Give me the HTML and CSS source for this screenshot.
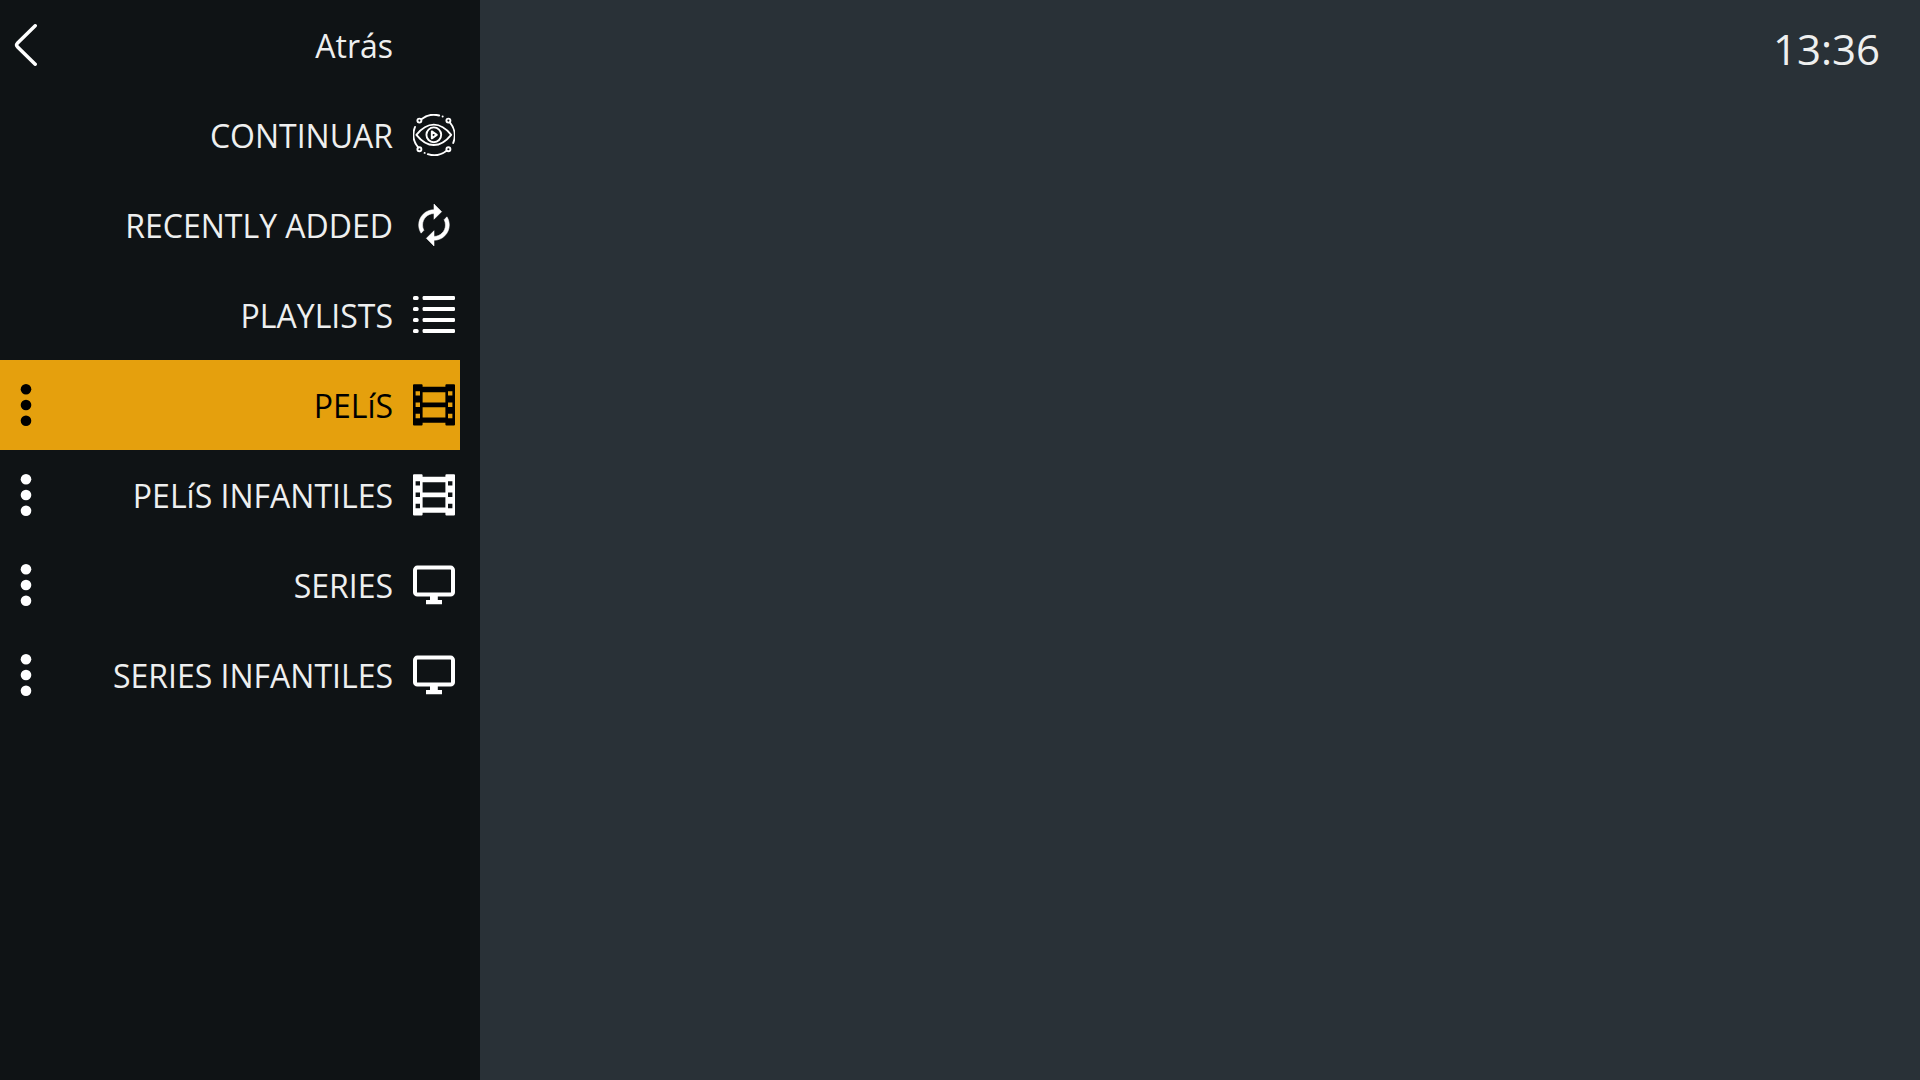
FILE: index.html
```html
<!DOCTYPE html>
<html lang="es">
<head>
    <meta charset="UTF-8">
    <title>Biblioteca</title>
    <link rel="stylesheet" href="styles.css">
</head>
<body>
    <svg class="sprite" aria-hidden="true">
        <symbol id="icon-back" viewBox="0 0 42 42">
            <path d="M30.2 1.8L12.6 19Q10.6 21 12.6 23L30.2 40.2" fill="none" stroke="currentColor" stroke-width="3.5" stroke-linecap="round"/>
        </symbol>
        <symbol id="icon-more" viewBox="0 0 42 42">
            <g fill="currentColor">
                <circle cx="21" cy="5.3" r="5.3"/>
                <circle cx="21" cy="21" r="5.3"/>
                <circle cx="21" cy="36.7" r="5.3"/>
            </g>
        </symbol>
        <symbol id="icon-eye" viewBox="0 0 42 42">
            <g fill="none" stroke="currentColor" stroke-width="1.9" stroke-linecap="round" stroke-linejoin="round">
                <circle cx="6.4" cy="6.6" r="2"/>
                <circle cx="35.4" cy="6.6" r="2"/>
                <circle cx="6.4" cy="35.2" r="2"/>
                <circle cx="35.4" cy="35.2" r="2"/>
                <path d="M8.4 5.2A20.2 20.2 0 0 1 26.2 1.5"/>
                <path d="M36.8 8.4A20.2 20.2 0 0 1 40.2 29"/>
                <path d="M33.6 36.8A20.2 20.2 0 0 1 14.8 40.2"/>
                <path d="M5.2 33.4A20.2 20.2 0 0 1 2 13"/>
                <path d="M29.6 2.5h.1M11.6 38.9h.1"/>
                <path d="M3.4 20.8Q11.6 10.6 20.8 10.6T38.2 20.8Q30 31 20.8 31T3.4 20.8z"/>
                <circle cx="20.8" cy="20.8" r="7.4"/>
                <path d="M18.8 17.4v7l5-3.5z"/>
            </g>
        </symbol>
        <symbol id="icon-recent" viewBox="1 1 22 22">
            <path fill="currentColor" stroke="currentColor" stroke-width=".3" d="M12 6v3l4-4-4-4v3c-4.42 0-8 3.58-8 8 0 1.57.46 3.03 1.24 4.26L6.7 14.8c-.45-.83-.7-1.79-.7-2.8 0-3.31 2.69-6 6-6zm6.76 1.74L17.3 9.2c.44.84.7 1.79.7 2.8 0 3.31-2.69 6-6 6v-3l-4 4 4 4v-3c4.42 0 8-3.58 8-8 0-1.57-.46-3.03-1.24-4.26z"/>
        </symbol>
        <symbol id="icon-list" viewBox="0 0 42 42">
            <g fill="currentColor">
                <rect x="0" y="2" width="5.6" height="4" rx="1.6"/>
                <rect x="9.6" y="2" width="32.4" height="4" rx="1.2"/>
                <rect x="0" y="13" width="5.6" height="4" rx="1.6"/>
                <rect x="9.6" y="13" width="32.4" height="4" rx="1.2"/>
                <rect x="0" y="24" width="5.6" height="4" rx="1.6"/>
                <rect x="9.6" y="24" width="32.4" height="4" rx="1.2"/>
                <rect x="0" y="35" width="5.6" height="4" rx="1.6"/>
                <rect x="9.6" y="35" width="32.4" height="4" rx="1.2"/>
            </g>
        </symbol>
        <symbol id="icon-film" viewBox="0 0 42 42">
            <path fill="currentColor" fill-rule="evenodd" d="M1 .3h7.6q1 0 1 1v1.5h22.8v-1.5q0-1 1-1H41q1 0 1 1v39.2q0 1-1 1h-7.6q-1 0-1-1v-1.7H9.6v1.7q0 1-1 1H1q-1 0-1-1V1.3q0-1 1-1zM9.6 8.2v10.2h22.8V8.2zM9.6 23.2v10.2h22.8V23.2zM2.6 7.2v4.4h4.4V7.2zM2.6 18.6v4.4h4.4v-4.4zM2.6 29.8v4.4h4.4v-4.4zM35 7.2v4.4h4.4V7.2zM35 18.6v4.4h4.4v-4.4zM35 29.8v4.4h4.4v-4.4z"/>
        </symbol>
        <symbol id="icon-tv" viewBox="0 0 42 42">
            <rect x="2" y="3.6" width="38" height="27" rx="2.4" fill="none" stroke="currentColor" stroke-width="4"/>
            <path fill="currentColor" d="M17 31h7.8v5H29v4.2H13V36h4z"/>
        </symbol>
    </svg>

    <nav class="sidebar">
        <a class="item back" href="#">
            <svg class="icon"><use href="#icon-back"/></svg>
            <span class="label">Atrás</span>
        </a>
        <ul class="menu">
            <li class="item">
                <a class="link" href="#continuar">CONTINUAR <svg class="icon"><use href="#icon-eye"/></svg></a>
            </li>
            <li class="item">
                <a class="link" href="#recientes">RECENTLY ADDED <svg class="icon"><use href="#icon-recent"/></svg></a>
            </li>
            <li class="item">
                <a class="link" href="#playlists">PLAYLISTS <svg class="icon"><use href="#icon-list"/></svg></a>
            </li>
            <li class="item active">
                <button class="more" type="button" aria-label="Más opciones"><svg class="icon"><use href="#icon-more"/></svg></button>
                <a class="link" href="#pelis" aria-current="page">PELíS <svg class="icon"><use href="#icon-film"/></svg></a>
            </li>
            <li class="item">
                <button class="more" type="button" aria-label="Más opciones"><svg class="icon"><use href="#icon-more"/></svg></button>
                <a class="link" href="#pelis-infantiles">PELíS INFANTILES <svg class="icon"><use href="#icon-film"/></svg></a>
            </li>
            <li class="item">
                <button class="more" type="button" aria-label="Más opciones"><svg class="icon"><use href="#icon-more"/></svg></button>
                <a class="link" href="#series">SERIES <svg class="icon"><use href="#icon-tv"/></svg></a>
            </li>
            <li class="item">
                <button class="more" type="button" aria-label="Más opciones"><svg class="icon"><use href="#icon-more"/></svg></button>
                <a class="link" href="#series-infantiles">SERIES INFANTILES <svg class="icon"><use href="#icon-tv"/></svg></a>
            </li>
        </ul>
    </nav>

    <main class="content">
        <time class="clock">13:36</time>
    </main>
</body>
</html>
```

FILE: styles.css
```css
:root {
    --fondo: #293137;
    --lateral: #0f1315;
    --naranja: #e5a00d;
    --texto: #eeefef;
}

* {
    box-sizing: border-box;
}

body {
    display: flex;
    min-height: 100vh;
    margin: 0;
    background-color: var(--fondo);
    color: var(--texto);
    font-family: "Open Sans", sans-serif;
    font-size: 32px;
}

.sprite {
    display: none;
}

.sidebar {
    flex: 0 0 25%;
    min-width: 440px;
    padding-right: 20px;
    background-color: var(--lateral);
}

.menu {
    margin: 0;
    padding: 0;
    list-style: none;
}

.item {
    display: flex;
    align-items: center;
    justify-content: space-between;
    height: 90px;
    padding: 0 5px;
}

.back {
    color: var(--texto);
    text-decoration: none;
}

/* deja libre la columna de iconos */
.back .label {
    margin-right: 62px;
}

.link {
    display: flex;
    flex: 1;
    align-items: center;
    justify-content: flex-end;
    gap: 20px;
    height: 100%;
    color: var(--texto);
    text-decoration: none;
    white-space: nowrap;
}

.more {
    display: flex;
    padding: 0;
    border: none;
    background: none;
    color: #fff;
    cursor: pointer;
}

.icon {
    flex: none;
    width: 42px;
    height: 42px;
    color: #fff;
}

.active {
    background-color: var(--naranja);
}

.active .link,
.active .icon {
    color: #000;
}

.content {
    flex: 1;
    padding: 20px 40px;
    text-align: right;
}

.clock {
    display: block;
    font-size: 42px;
}
```
